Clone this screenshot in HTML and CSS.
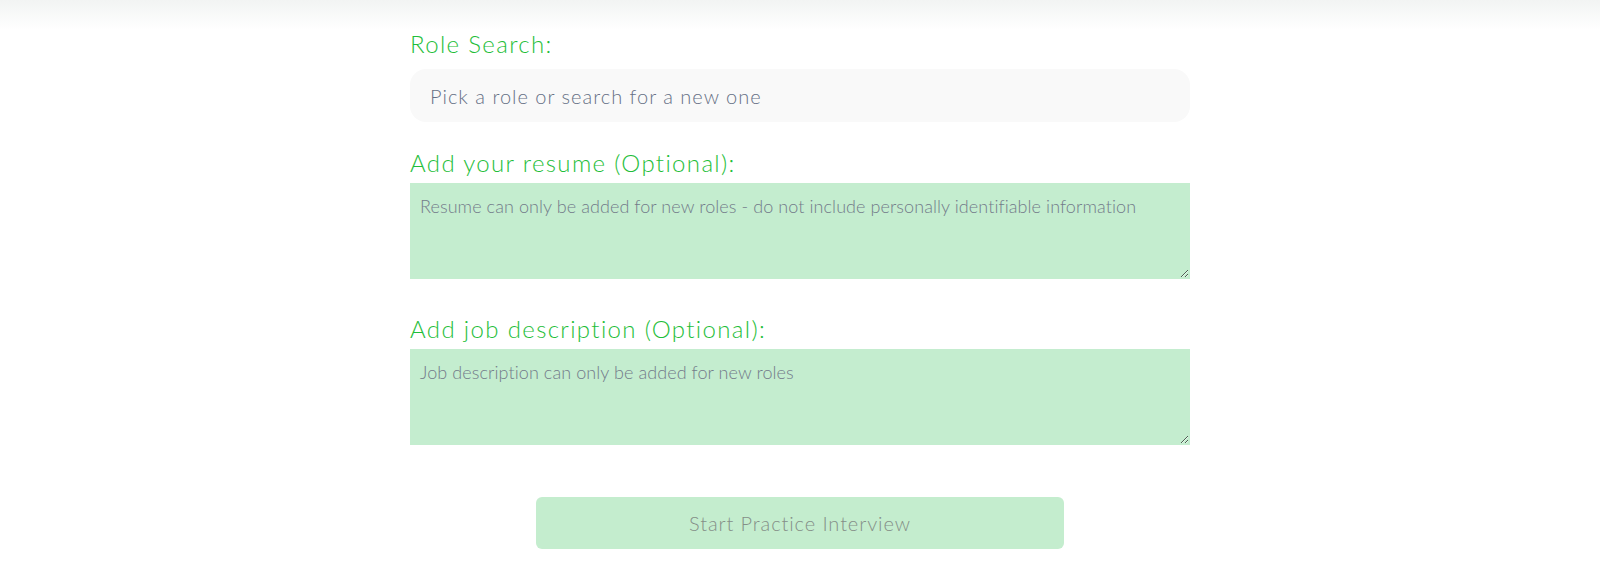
FILE: index.html
```html
<!DOCTYPE html>
<html lang="en">
<head>
<meta charset="utf-8">
<title>Practice Interview</title>
<link rel="stylesheet" href="styles.css">
</head>
<body>
<div class="topshade"></div>
<main class="form">
  <div class="field field--search">
    <label class="field-label" for="role">Role Search:</label>
    <input class="search-input" id="role" type="text" placeholder="Pick a role or search for a new one">
  </div>
  <div class="field field--area">
    <label class="field-label" for="resume">Add your resume (Optional):</label>
    <textarea class="area" id="resume" placeholder="Resume can only be added for new roles - do not include personally identifiable information" disabled></textarea>
  </div>
  <div class="field field--area field--last">
    <label class="field-label" for="jd">Add job description (Optional):</label>
    <textarea class="area" id="jd" placeholder="Job description can only be added for new roles" disabled></textarea>
  </div>
  <div class="actions">
    <button class="start-btn" type="button" disabled>Start Practice Interview</button>
  </div>
</main>
</body>
</html>
```

FILE: styles.css
```css
html, body {
  margin: 0;
  padding: 0;
  background: #ffffff;
}

body {
  font-family: Lato, "Open Sans", sans-serif;
  width: 1600px;
  height: 580px;
  overflow: hidden;
}

.topshade {
  height: 30px;
  background: linear-gradient(#f2f4f3, #ffffff);
}

.form {
  width: 780px;
  margin: 0 auto;
  display: flex;
  flex-direction: column;
}

.field-label {
  display: block;
  font-size: 24px;
  font-weight: 300;
  line-height: 28px;
  color: #1fbe3a;
  margin-bottom: 6px;
  letter-spacing: 1.35px;
}

.field--search {
  margin-bottom: 27px;
}

.field--search .field-label {
  margin-bottom: 11px;
}

.search-input {
  display: block;
  box-sizing: border-box;
  width: 100%;
  height: 53px;
  border: none;
  border-radius: 16px;
  background: #f9f9f9;
  padding: 0 20px;
  font-family: inherit;
  font-size: 20px;
  font-weight: 300;
  color: #374151;
  outline: none;
}

.search-input::placeholder {
  color: #667085;
  letter-spacing: 1px;
}

.field--area {
  margin-bottom: 36px;
}

.field--last {
  margin-bottom: 52px;
}

.area {
  display: block;
  box-sizing: border-box;
  width: 100%;
  height: 96px;
  margin: 0;
  border: 1px solid #c4edcf;
  border-radius: 0;
  background: #c4edcf;
  padding: 10px 9px;
  font-family: inherit;
  font-size: 18px;
  font-weight: 300;
  line-height: 24px;
  color: #374151;
  outline: none;
  resize: vertical;
}

.area::placeholder {
  color: #737b8a;
  letter-spacing: 0.08px;
}

.actions {
  display: flex;
  justify-content: center;
}

.start-btn {
  width: 528px;
  height: 52px;
  border: none;
  border-radius: 6px;
  background: #c4edce;
  color: #858f88;
  font-family: inherit;
  font-size: 20px;
  font-weight: 300;
  letter-spacing: 0.9px;
}
```
